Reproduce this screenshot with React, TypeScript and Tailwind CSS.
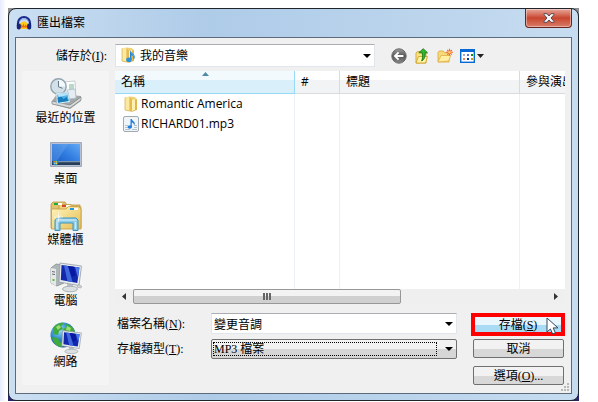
import { useState } from "react";
import type { ReactNode } from "react";

const UI_FONT = "font-['Open_Sans','Noto_Sans_CJK_TC',sans-serif]";
const DIALOG_FONT = "font-['Liberation_Serif','Noto_Sans_CJK_TC',serif]";

function HeadphonesIcon() {
  return (
    <svg width="16" height="16" viewBox="0 0 16 16">
      <path d="M4 8.5 8 6l4 2.5V14H4z" fill="#ffc91a" />
      <path d="m4 11 1.2-1.8 1 2.4 1.2-3 1.2 2.8 1-2.2 1 1.8 1.2-.6v2H4z" fill="#f0611d" />
      <path d="M2 10V8a6 6 0 0 1 12 0v2" fill="none" stroke="#1c2a8c" strokeWidth="2.2" />
      <path d="M3.5 6.5a5 5 0 0 1 9 0" fill="none" stroke="#6f8be8" strokeWidth=".8" />
      <rect x=".8" y="8.5" width="4" height="6" rx="1.8" fill="#17247c" />
      <rect x="11.2" y="8.5" width="4" height="6" rx="1.8" fill="#17247c" />
    </svg>
  );
}

function CloseIcon() {
  return (
    <svg width="12" height="10" viewBox="0 0 12 10">
      <path
        d="M1 .7h3L6 3 8 .7h3v1L8 5l3 3.3v1H8L6 7 4 9.3H1v-1L4 5 1 1.7z"
        fill="#f5f5f7"
        stroke="#59484f"
      />
    </svg>
  );
}

function FolderShape() {
  return (
    <>
      <path d="M2 1.5 6.5.5l5 .5 2.5 2v10.5l-5 1.7L2 14z" fill="#efd072" />
      <path d="M2 1.5 6.5 1v13.8L2 14z" fill="#fbe9a0" />
      <path d="M6.5 1 9 3.5V15l-2.5-.5z" fill="#e3bb52" />
      <path d="m9 4 3-1v11l-3 1.5z" fill="#fdf0b0" />
      <path d="M12 3.5 14 4v9.5l-2 .5z" fill="#e0b64a" />
      <path d="M2 1.5V14l7 1.5 5-2" fill="none" stroke="#cfa23a" strokeWidth=".6" />
    </>
  );
}

function FolderIcon() {
  return (
    <svg width="16" height="16" viewBox="0 0 16 16" className="shrink-0">
      <FolderShape />
    </svg>
  );
}

function MusicFolderIcon() {
  return (
    <svg width="16" height="16" viewBox="0 0 16 16">
      <FolderShape />
      <path d="M10 3c.6 2.8 5 3.6 4.8 7.2-.1 1-.6 1.9-1.4 2.5.5-2.5-.4-3.8-1.8-4.4v4.4H10z" fill="#2385d2" />
      <ellipse cx="9" cy="12.7" rx="2.8" ry="2.3" fill="#2790df" />
      <path d="M10.8 5.5c1 1.2 2.8 2 3 4" fill="none" stroke="#7cc3f2" strokeWidth=".7" />
    </svg>
  );
}

function Mp3Icon() {
  return (
    <svg width="16" height="16" viewBox="0 0 16 16" className="shrink-0">
      <rect x=".5" y=".5" width="15" height="15" rx="1.5" fill="#f2f5f7" stroke="#a0a9b1" />
      <path d="M2 9.5h3M2 11.5h3M2 13.5h5M11 9.5h3M11 11.5h3M9 13.5h5" stroke="#b5c3cf" />
      <path d="M7.5 3h1.3c.3 2 3.2 2.3 3 4.6 0 .8-.4 1.3-.9 1.7.2-1.7-.7-2.4-2.1-2.8v4.7H7.5z" fill="#1f7fe0" />
      <ellipse cx="6.8" cy="11" rx="2.2" ry="1.8" fill="#1f7fe0" />
    </svg>
  );
}

function BackIcon() {
  return (
    <svg width="16" height="16" viewBox="0 0 16 16">
      <defs>
        <linearGradient id="back" x1="0" y1="0" x2="0" y2="1">
          <stop offset="0" stopColor="#a0a0a0" />
          <stop offset=".5" stopColor="#555" />
          <stop offset="1" stopColor="#8a8a8a" />
        </linearGradient>
      </defs>
      <circle cx="8" cy="8" r="7.2" fill="url(#back)" stroke="#6a6a6a" />
      <path d="m7.6 4.3-3.7 3.7 3.7 3.7M4.4 8h8" fill="none" stroke="#fff" strokeWidth="1.9" />
    </svg>
  );
}

function UpFolderIcon() {
  return (
    <svg width="16" height="16" viewBox="0 0 16 16">
      <path d="M2 15V5l1.2-1.4h3L7.5 5H12v10z" fill="#fbe381" stroke="#d0a12d" strokeWidth=".9" />
      <path d="M2 15 4.5 8.5h9L11.5 15z" fill="#fff3a6" stroke="#d0a12d" strokeWidth=".9" />
      <path d="M4.8 4.8 9.2.7l4.3 4.1h-2.4c.2 4-.7 6.7-3.4 8.2 1-2.6 1-5 .5-8.2z" fill="#35b62d" stroke="#157a1a" strokeWidth=".9" />
    </svg>
  );
}

function NewFolderIcon() {
  return (
    <svg width="16" height="16" viewBox="0 0 16 16">
      <path d="M1 14V4.5L2.2 3h4l1.3 1.6H12V14z" fill="#f8d978" stroke="#dfab48" strokeWidth=".9" />
      <path d="m1 14 3-6.5h9.6L11.8 13z" fill="#ffefa1" stroke="#e2b350" strokeWidth=".9" />
      <path d="M12.5.8v7M9 4.3h7M10.2 2l4.6 4.6M14.8 2l-4.6 4.6" stroke="#f2683a" strokeWidth="1.1" />
      <circle cx="12.5" cy="4.3" r="1.3" fill="#ffd36a" />
    </svg>
  );
}

function ViewIcon() {
  return (
    <svg width="25" height="16" viewBox="0 0 25 16">
      <rect x=".7" y="1.7" width="13.6" height="12.6" fill="#fff" stroke="#0868d6" strokeWidth="1.4" />
      <path d="M0 1h15v3H0z" fill="#0868d6" />
      <path d="M3 6h2v2H3z" fill="#a8a6d0" />
      <path d="M7 6h2v2H7z" fill="#5a72d2" />
      <path d="M11 6h2v2h-2z" fill="#118b19" />
      <path d="M3 10h2v2H3z" fill="#ef8164" />
      <path d="M7 10h2v2H7z" fill="#07318f" />
      <path d="M11 10h2v2h-2z" fill="#c59b16" />
      <path d="M17 6h7l-3.5 4z" fill="#222" />
    </svg>
  );
}

function RecentIcon() {
  return (
    <svg width="32" height="32" viewBox="0 0 32 32">
      <path d="m2 23 5-7 24 2v5L20 31 2 26z" fill="#a4a7a8" />
      <path d="m2 23 18 4 11-8v3L20 30 2 26z" fill="#d8dada" stroke="#7d8183" strokeWidth=".7" />
      <path d="m12 4 13-1 1 17-13 2z" fill="#fbfcfc" stroke="#b5bbbf" strokeWidth=".7" />
      <path d="M19 7h5M19 9h5M19 11h5" stroke="#7bb295" />
      <path d="m17 12 8-1 1 9-8 1z" fill="#e5edf2" stroke="#9fb3c1" strokeWidth=".6" />
      <circle cx="8.5" cy="8.5" r="7.7" fill="#d3e0e8" stroke="#93a4b0" strokeWidth="1.4" />
      <path d="M8.5 8.5V1.8a6.8 6.8 0 0 1 6.7 6.7z" fill="#f4f9fb" />
      <path d="M8.5 3v5.8l4 1.5" fill="none" stroke="#637889" />
      <path d="m6 15 12-1 2 10-13 2z" fill="#fff" stroke="#9bb3c4" strokeWidth=".6" />
      <path d="m7 16 10.3-1L19 23l-11 1.7z" fill="#4fb2e8" />
      <path d="m7.6 20 3-2 3 3 3-2 1.8 4-10.4 1.7z" fill="#187dbc" />
      <path d="m7 16 10.3-1 .4 2L9 19z" fill="#b7e4f9" />
    </svg>
  );
}

function DesktopIcon() {
  return (
    <svg width="32" height="32" viewBox="0 0 32 32">
      <defs>
        <linearGradient id="desk" x1="0" y1="1" x2="1" y2="0">
          <stop offset="0" stopColor="#1456c4" />
          <stop offset=".5" stopColor="#2f7bdf" />
          <stop offset="1" stopColor="#62a9f5" />
        </linearGradient>
      </defs>
      <rect x=".7" y="3.7" width="30.6" height="23.6" fill="#c4cbd9" stroke="#8f9bb0" />
      <rect x="2" y="5" width="28" height="21" fill="url(#desk)" />
      <path d="M2 5h16L7 22H2z" fill="#76b0ee" opacity=".35" />
      <path d="M2 22h28v4H2z" fill="#253d58" />
      <path d="M8 22h22v1.3H8z" fill="#7b93ab" />
      <circle cx="5.5" cy="23.5" r="2.8" fill="#2489b9" />
      <path d="M4 22h1.4v1.4H4z" fill="#ef7b39" />
      <path d="M5.7 22h1.4v1.4H5.7z" fill="#9fe058" />
      <path d="M4 23.7h1.4v1.4H4z" fill="#79cdf8" />
      <path d="M5.7 23.7h1.4v1.4H5.7z" fill="#f8e04d" />
    </svg>
  );
}

function LibraryIcon() {
  return (
    <svg width="32" height="32" viewBox="0 0 32 32">
      <defs>
        <linearGradient id="lib" x1="0" y1="0" x2="1" y2="1">
          <stop offset="0" stopColor="#fff5bd" />
          <stop offset="1" stopColor="#e6bd53" />
        </linearGradient>
      </defs>
      <path d="M1 28V4l2-2h12l2 3h13v23z" fill="#e2c26a" stroke="#b99645" strokeWidth=".8" />
      <path d="M9 7V4.5h12l2 2.5h8v21H9z" fill="#efd37d" stroke="#bb9848" strokeWidth=".8" />
      <path d="M4 3h4v2H4z" fill="#1cae34" />
      <path d="M8 3h4v2H8z" fill="#fff" />
      <path d="M12 5h4v2h-4z" fill="#d84824" />
      <path d="M16 5h4v2h-4z" fill="#fff" />
      <path d="M1.5 29V9H16l2.5-2.5h10L31 9v20z" fill="url(#lib)" stroke="#c19d47" strokeWidth=".8" />
      <path d="M20 8h4v2h-4z" fill="#2196de" />
      <path d="M24 8h4v2h-4z" fill="#fff" />
      <path d="M5 30.5V20l2-2h19l2 2v10.5h-5V23H10v7.5z" fill="#8bcbe8" stroke="#3e94be" />
      <path d="M7 19.5h19l1 1H6z" fill="#dbf4fc" />
      <path d="M7 21v8M25.5 22v7" stroke="#c8ebf7" strokeWidth="1.4" />
      <path d="M8.5 12v10M4 17h9M6 14.5l5 5M11 14.5l-5 5" stroke="#fff" strokeWidth=".6" />
    </svg>
  );
}

function Monitor() {
  return (
    <>
      <path d="m17 20 6 1v6h-6z" fill="#bec5ca" />
      <ellipse cx="20" cy="28" rx="7.5" ry="2.8" fill="#dce0e2" stroke="#929b9f" strokeWidth=".7" />
      <path d="m10 2 21.5 3-2.5 19.5L9 21z" fill="#e8ecef" stroke="#929ca4" strokeWidth=".8" />
      <path d="m11.5 4 18 2.5-2.2 15.5L10.8 19z" fill="#1329ad" />
      <path d="m14 4.4 4 .6 4.5 16.1-5-.9z" fill="#4068dd" />
      <path d="m18 5 6 .8 1.5 9-3.5 1.2z" fill="#0918a2" />
      <path d="m25 5.9 4.4.6-1.4 10.5z" fill="#4b78e8" />
    </>
  );
}

function ComputerIcon() {
  return (
    <svg width="32" height="32" viewBox="0 0 32 32">
      <path d="m1 7 5-4 8 1v18l-7 3-6-3z" fill="#aeb5b8" stroke="#7e8688" strokeWidth=".7" />
      <path d="m1 7 5 1v17l-5-3z" fill="#e5e8e9" />
      <path d="M2 10.5l3 .6M2 13l3 .6" stroke="#666f72" />
      <path d="M2.5 18h2v2h-2z" fill="#5dc22e" />
      <Monitor />
      <path d="m27 26 4 1 .5-2-3-1.5z" fill="#d5dadd" stroke="#969fa4" strokeWidth=".6" />
    </svg>
  );
}

function NetworkIcon() {
  return (
    <svg width="32" height="32" viewBox="0 0 32 32">
      <defs>
        <radialGradient id="globe" cx=".35" cy=".3" r=".75">
          <stop offset="0" stopColor="#9fe2fb" />
          <stop offset=".5" stopColor="#2c87ca" />
          <stop offset="1" stopColor="#124a91" />
        </radialGradient>
      </defs>
      <circle cx="13" cy="13" r="12.5" fill="url(#globe)" />
      <path d="M3 6c3-4 7-6 11-5l-3 3 2 3-4 2-1 4-5-1zM15 2c5 0 9 4 10 8l-5 3-6-2-1-4 4-2zM2 15l6 1 2 4 4 2-2 3c-5 0-9-4-10-10z" fill="#41aa3d" />
      <path d="M6 5 9 3l2 2-3 3zM17 4l4 2-1 3-4-1z" fill="#a1db73" />
      <g transform="translate(4 7) scale(.87 .8)">
        <Monitor />
      </g>
    </svg>
  );
}

function CursorIcon() {
  return (
    <svg width="13" height="18" viewBox="0 0 13 18">
      <path
        d="M1 1v14l3.4-3 2.3 5 2.7-1.2-2.2-4.9H12z"
        fill="#fff"
        stroke="#37475c"
        strokeLinejoin="round"
      />
    </svg>
  );
}

function ComboArrow() {
  return (
    <svg
      width="8"
      height="4"
      viewBox="0 0 8 4"
      className="pointer-events-none absolute top-1/2 right-1 -translate-y-1/2"
    >
      <path d="M0 0h8L4 4z" fill="#000" />
    </svg>
  );
}

const places: { name: string; icon: ReactNode }[] = [
  { name: "最近的位置", icon: <RecentIcon /> },
  { name: "桌面", icon: <DesktopIcon /> },
  { name: "媒體櫃", icon: <LibraryIcon /> },
  { name: "電腦", icon: <ComputerIcon /> },
  { name: "網路", icon: <NetworkIcon /> },
];

const files = [
  { name: "Romantic America", icon: <FolderIcon /> },
  { name: "RICHARD01.mp3", icon: <Mp3Icon /> },
];

const tools = [
  { label: "上一頁", icon: <BackIcon /> },
  { label: "上移一層", icon: <UpFolderIcon /> },
  { label: "建立新資料夾", icon: <NewFolderIcon /> },
  { label: "檢視", icon: <ViewIcon /> },
];

function TitleBar() {
  return (
    <header className="flex h-7 items-start justify-between pr-1.5 pl-[7px]">
      <div className="flex h-full items-center gap-[5px]">
        <HeadphonesIcon />
        <h1 className={`text-xs ${UI_FONT}`}>匯出檔案</h1>
      </div>
      <button
        type="button"
        aria-label="關閉"
        className="flex h-[19px] w-[47px] items-center justify-center rounded-b border border-t-0 border-[#6b2320] bg-linear-to-b from-[#e5a79b] via-[#c8452f] via-50% to-[#d77c68] shadow-[inset_0_0_0_1px_#ffffff66]"
      >
        <CloseIcon />
      </button>
    </header>
  );
}

function Sidebar() {
  return (
    <nav className={`flex w-[87px] shrink-0 flex-col gap-3.5 bg-[#f4f4f4] pt-[7px] ${UI_FONT}`}>
      {places.map((place) => (
        <button key={place.name} type="button" className="flex flex-col items-center text-xs leading-[15px]">
          {place.icon}
          {place.name}
        </button>
      ))}
    </nav>
  );
}

function FileList() {
  return (
    <div className={`bg-white ${UI_FONT}`}>
      <div className="overflow-hidden">
        <table className="w-[540px] min-w-full table-fixed border-separate border-spacing-0 text-left text-xs">
          <thead>
            <tr className="h-[23px]">
              <th className="relative w-[180px] border-r border-b border-[#96d9f9] bg-linear-to-b from-[#f3fafd] from-40% to-[#d9effa] to-40% px-1.5 font-normal">
                名稱
                <svg width="7" height="4" viewBox="0 0 7 4" className="absolute top-px left-[87px]">
                  <path d="M0 4 3.5 0 7 4z" fill="#4b8ba8" />
                </svg>
              </th>
              <th className="w-[45px] border-r border-b border-[#d9dadc] bg-linear-to-b from-white from-40% to-[#f2f3f4] to-40% px-1.5 font-normal">
                #
              </th>
              <th className="w-[180px] border-r border-b border-[#d9dadc] bg-linear-to-b from-white from-40% to-[#f2f3f4] to-40% px-1.5 font-normal">
                標題
              </th>
              <th className="border-b border-[#d9dadc] bg-linear-to-b from-white from-40% to-[#f2f3f4] to-40% px-1.5 font-normal whitespace-nowrap">
                參與演出
              </th>
            </tr>
          </thead>
          <tbody>
            {files.map((file) => (
              <tr key={file.name} className="h-5">
                <td className="border-r border-[#e9f1fa] p-0 pl-2">
                  <div className="flex items-center gap-0.5 leading-5">
                    {file.icon}
                    {file.name}
                  </div>
                </td>
                <td className="border-r border-[#e9f1fa]" />
                <td className="border-r border-[#e9f1fa]" />
                <td />
              </tr>
            ))}
            <tr className="h-[155px]">
              <td className="border-r border-[#e9f1fa]" />
              <td className="border-r border-[#e9f1fa]" />
              <td className="border-r border-[#e9f1fa]" />
              <td />
            </tr>
          </tbody>
        </table>
      </div>
      <div className="flex h-[15px] bg-[#efefef]">
        <button type="button" aria-label="向左捲動" className="flex w-[18px] items-center justify-center">
          <svg width="4" height="7" viewBox="0 0 4 7">
            <path d="M4 0v7L0 3.5z" fill="#333" />
          </svg>
        </button>
        <div className="flex w-[268px] items-center justify-center gap-px rounded-xs border border-[#979797] bg-linear-to-b from-[#f3f3f3] from-50% to-[#d0d0d0] to-50%">
          <span className="h-[7px] w-0.5 bg-[#666]" />
          <span className="h-[7px] w-0.5 bg-[#666]" />
          <span className="h-[7px] w-0.5 bg-[#666]" />
        </div>
        <button type="button" aria-label="向右捲動" className="ml-auto flex w-[18px] items-center justify-center">
          <svg width="4" height="7" viewBox="0 0 4 7">
            <path d="M0 0v7l4-3.5z" fill="#333" />
          </svg>
        </button>
      </div>
    </div>
  );
}

function SaveForm() {
  const [fileName, setFileName] = useState("變更音調");

  return (
    <div className="flex justify-between gap-3.5">
      <div className="flex flex-1 flex-col gap-[5px]">
        <div className="flex h-[21px] items-center">
          <label htmlFor="file-name" className="w-24 shrink-0 pl-0.5">
            檔案名稱(<u>N</u>):
          </label>
          <div className="relative h-full flex-1">
            <input
              id="file-name"
              value={fileName}
              onChange={(e) => setFileName(e.target.value)}
              className="h-full w-full border border-[#e1e6ed] border-t-[#abadb3] bg-white pr-4 pl-0.5"
            />
            <ComboArrow />
          </div>
        </div>
        <div className="flex h-5 items-center">
          <label htmlFor="file-type" className="w-24 shrink-0 pl-0.5">
            存檔類型(<u>T</u>):
          </label>
          <div className="relative h-full flex-1">
            <select
              id="file-type"
              className="h-full w-full appearance-none rounded-xs border border-[#707070] bg-linear-to-b from-[#f2f2f2] from-50% to-[#d6d6d6] to-50% pl-0.5"
            >
              <option>MP3 檔案</option>
            </select>
            <span className="pointer-events-none absolute inset-y-[3px] right-5 left-0.5 border border-dotted border-black" />
            <ComboArrow />
          </div>
        </div>
      </div>
      <div className="flex w-[94px] flex-col items-end">
        <button
          type="button"
          className="relative flex h-[23px] w-full items-center justify-center border-4 border-[#fe0000] bg-linear-to-b from-[#e9f6fd] from-50% to-[#a9dbf5] to-50%"
        >
          <span>
            存檔(<u>S</u>)
          </span>
          <span className="absolute top-0 right-0.5">
            <CursorIcon />
          </span>
        </button>
        <button
          type="button"
          className="mt-[3px] mr-px flex h-[19px] w-[91px] items-center justify-center rounded-xs border border-[#707070] bg-linear-to-b from-[#f2f2f2] from-50% to-[#d8d8d8] to-50%"
        >
          取消
        </button>
        <button
          type="button"
          className="mt-2 mr-px flex h-[19px] w-[91px] items-center justify-center rounded-xs border border-[#707070] bg-linear-to-b from-[#f2f2f2] from-50% to-[#d8d8d8] to-50%"
        >
          <span>
            選項(<u>O</u>)...
          </span>
        </button>
      </div>
    </div>
  );
}

export default function App() {
  return (
    <div className="bg-linear-to-r from-[#e6ebff] to-white to-[6px] pt-2 pr-[19px] pl-2 text-black">
      <div className="bg-linear-to-b from-[#8b8d90] from-50% to-[#29246a] to-50%">
        <div className="rounded-lg border border-[#20252b] bg-linear-to-r from-[#cbdff2] via-[#aecbe8] via-35% to-[#c6dcf0] px-1.5 pb-1.5">
          <div className="-mx-1.5">
            <TitleBar />
          </div>
          <main className={`relative border border-[#5b6b7c] bg-[#f0f0f0] px-1.5 pt-1.5 pb-2 text-xs ${DIALOG_FONT}`}>
            <div className="flex h-[23px] items-center">
              <label htmlFor="save-in" className="w-[93px] pr-2 text-right">
                儲存於(<u>I</u>):
              </label>
              <div className="relative h-full w-[260px]">
                <select
                  id="save-in"
                  className={`h-full w-full appearance-none border border-[#e1e6ed] border-t-[#abadb3] bg-white pl-6 ${UI_FONT}`}
                >
                  <option>我的音樂</option>
                </select>
                <span className="pointer-events-none absolute top-[3px] left-[5px]">
                  <MusicFolderIcon />
                </span>
                <ComboArrow />
              </div>
              <div className="ml-4 flex gap-[7px]">
                {tools.map((tool) => (
                  <button key={tool.label} type="button" aria-label={tool.label}>
                    {tool.icon}
                  </button>
                ))}
              </div>
            </div>
            <div className="mt-1 flex gap-1.5">
              <Sidebar />
              <div className="flex min-w-0 flex-1 flex-col gap-[9px]">
                <FileList />
                <SaveForm />
              </div>
            </div>
            <svg width="8" height="8" viewBox="0 0 8 8" className="absolute right-0.5 bottom-0.5">
              <path d="M6 0h2v2H6zM3 3h2v2H3zM6 3h2v2H6zM0 6h2v2H0zM3 6h2v2H3zM6 6h2v2H6z" fill="#b9b9b9" />
            </svg>
          </main>
        </div>
      </div>
    </div>
  );
}
